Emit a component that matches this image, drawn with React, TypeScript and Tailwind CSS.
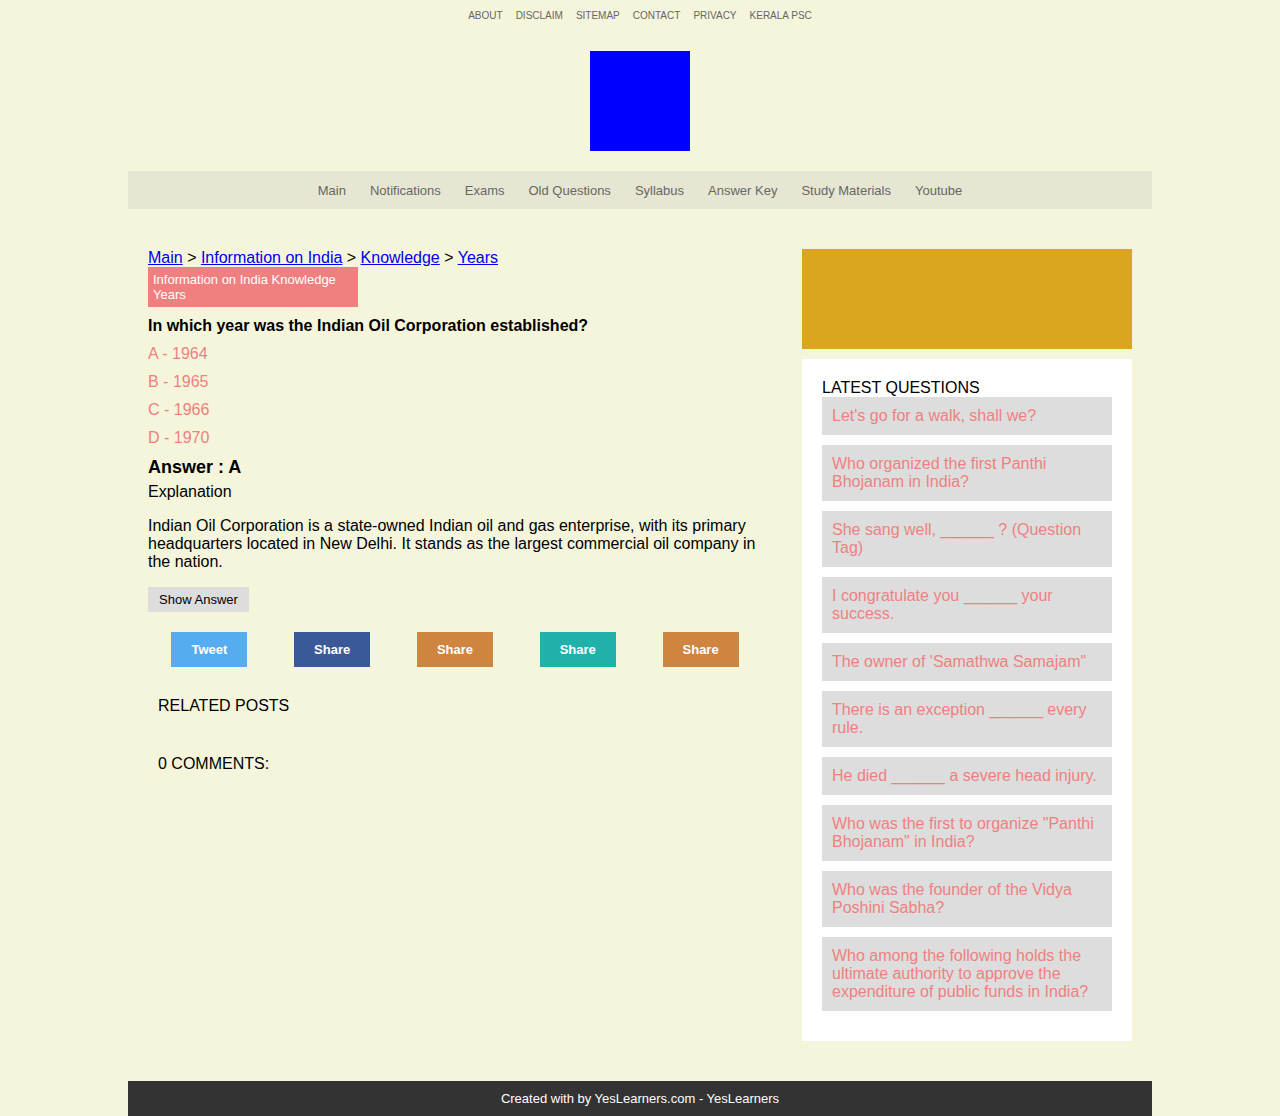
import React from "react";

const topLinks = ["ABOUT", "DISCLAIM", "SITEMAP", "CONTACT", "PRIVACY", "KERALA PSC"];
const navLinks = ["Main", "Notifications", "Exams", "Old Questions", "Syllabus", "Answer Key", "Study Materials", "Youtube"];
const options = ["A - 1964", "B - 1965", "C - 1966", "D - 1970"];

const shares = [
  { label: "Tweet", bg: "bg-[#55acee]" },
  { label: "Share", bg: "bg-[#3b5998]" },
  { label: "Share", bg: "bg-[#cd853f]" },
  { label: "Share", bg: "bg-[#20b2aa]" },
  { label: "Share", bg: "bg-[#cd853f]" },
];

const latest = [
  "Let's go for a walk, shall we?",
  "Who organized the first Panthi Bhojanam in India?",
  "She sang well, ______ ? (Question Tag)",
  "I congratulate you ______ your success.",
  "The owner of 'Samathwa Samajam\"",
  "There is an exception ______ every rule.",
  "He died ______ a severe head injury.",
  "Who was the first to organize \"Panthi Bhojanam\" in India?",
  "Who was the founder of the Vidya Poshini Sabha?",
  "Who among the following holds the ultimate authority to approve the expenditure of public funds in India?",
];

function Crumb({ children }: { children: React.ReactNode }) {
  return <a className="text-[#0000ee] underline">{children}</a>;
}

export default function App() {
  return (
    <div className="min-h-[1116px] bg-[#f5f5dc] font-['Liberation_Sans',Arial,sans-serif] text-black">
      <div className="flex justify-center gap-[13px] pt-[10px] text-[10px] leading-[12px] text-[#666]">
        {topLinks.map((l) => (
          <a key={l}>{l}</a>
        ))}
      </div>

      <div className="flex justify-center pt-[29px] pb-[20px]">
        <div className="h-[100px] w-[100px] bg-[#0000ff]" />
      </div>

      <div className="mx-auto w-[1024px]">
        <nav className="flex h-[38px] items-center justify-center gap-[24px] bg-[#e6e6d2] pt-[1px] text-[13px] text-[#666]">
          {navLinks.map((l) => (
            <a key={l}>{l}</a>
          ))}
        </nav>

        <div className="flex gap-[20px] px-[20px] pt-[40px] pb-[40px]">
          <main className="w-[634px]">
            <div className="text-[16px] leading-[18px]">
              <Crumb>Main</Crumb> &gt; <Crumb>Information on India</Crumb> &gt; <Crumb>Knowledge</Crumb> &gt;{" "}
              <Crumb>Years</Crumb>
            </div>
            <div className="w-[210px] bg-[#f08080] px-[5px] py-[5px] text-[13px] leading-[15px] text-white">
              Information on India Knowledge Years
            </div>
            <h1 className="mt-[10px] text-[16px] leading-[18px] font-bold">
              In which year was the Indian Oil Corporation established?
            </h1>
            <div className="flex flex-col">
              {options.map((o) => (
                <div key={o} className="pt-[10px] text-[16px] leading-[18px] text-[#f08080]">
                  {o}
                </div>
              ))}
            </div>
            <div className="mt-[9px] text-[18px] leading-[22px] font-bold">Answer : A</div>
            <div className="mt-[5px] text-[16px] leading-[18px]">Explanation</div>
            <p className="mt-[16px] text-[16px] leading-[18px]">
              Indian Oil Corporation is a state-owned Indian oil and gas enterprise, with its primary headquarters
              located in New Delhi. It stands as the largest commercial oil company in the nation.
            </p>
            <button className="mt-[16px] h-[25px] w-[101px] bg-[#dddddd] text-[13px]">Show Answer</button>

            <div className="mt-[20px] grid w-[614px] grid-cols-5">
              {shares.map((s, i) => (
                <div key={i} className="flex justify-center">
                  <a
                    className={`flex h-[35px] w-[76px] items-center justify-center text-[13px] font-bold text-white ${s.bg}`}
                  >
                    {s.label}
                  </a>
                </div>
              ))}
            </div>

            <h3 className="mt-[30px] pl-[10px] text-[16px] leading-[18px]">RELATED POSTS</h3>
            <h3 className="mt-[40px] pl-[10px] text-[16px] leading-[18px]">0 COMMENTS:</h3>
          </main>

          <aside className="w-[330px]">
            <div className="h-[100px] bg-[#daa520]" />
            <div className="mt-[10px] bg-white px-[20px] pt-[20px] pb-[30px]">
              <h2 className="text-[16px] leading-[18px]">LATEST QUESTIONS</h2>
              <div className="flex flex-col gap-[10px]">
                {latest.map((q) => (
                  <a key={q} className="block bg-[#dddddd] p-[10px] text-[16px] leading-[18px] text-[#f08080]">
                    {q}
                  </a>
                ))}
              </div>
            </div>
          </aside>
        </div>

        <footer className="flex h-[35px] items-center justify-center bg-[#333333] text-[13px] text-white">
          Created with by YesLearners.com - YesLearners
        </footer>
      </div>
    </div>
  );
}
